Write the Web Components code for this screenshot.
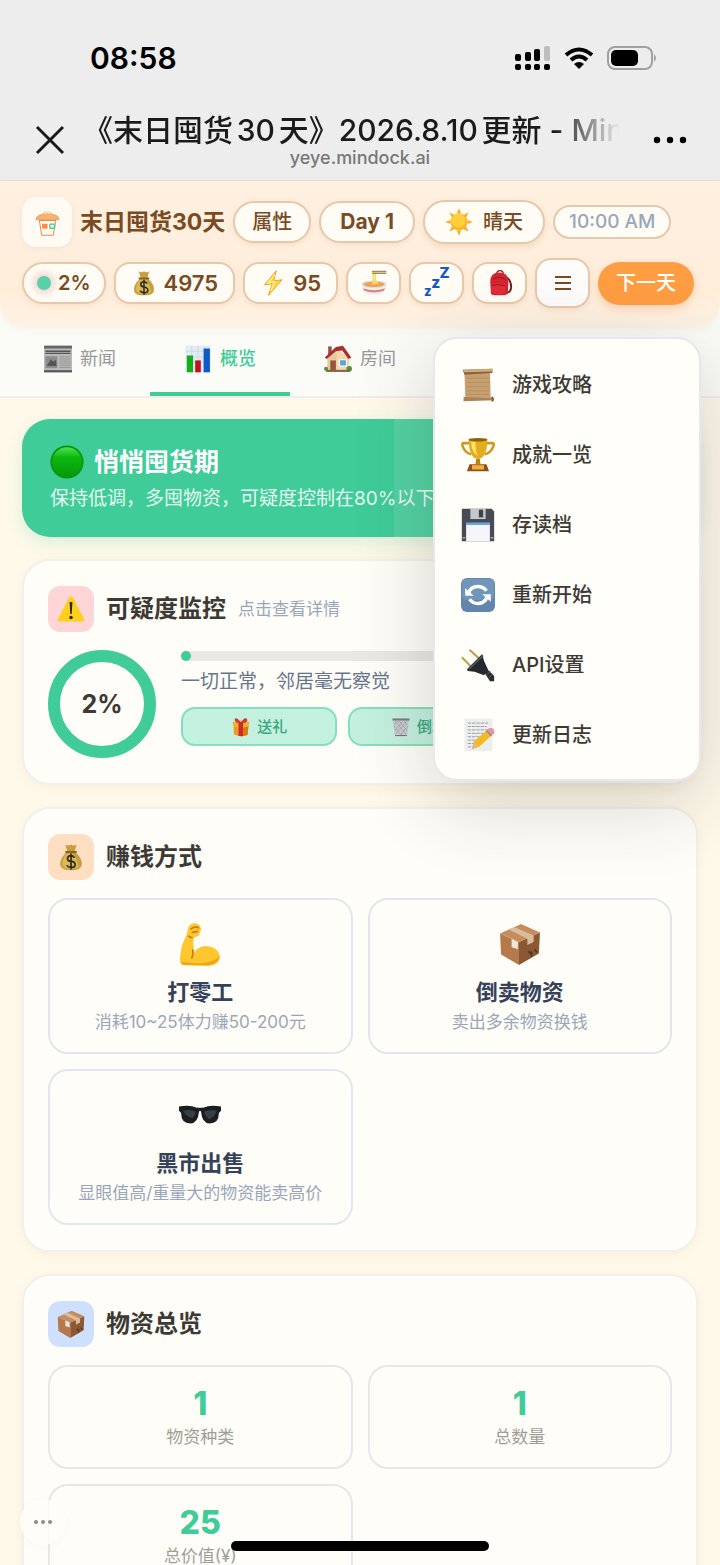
<!DOCTYPE html>
<html lang="zh-CN">
<head>
<meta charset="UTF-8">
<meta name="viewport" content="width=device-width, initial-scale=1">
<title>末日囤货30天</title>
<style>
  :root {
    --green: #3fcc99;
    --brown: #7a4a22;
    --ink: #3d3a35;
    --cream: #fffdf7;
    --muted: #9aa6ba;
    --tan: #e6c8ab;
  }
  body {
    margin: 0;
    font-family: Inter, "Noto Sans CJK SC", sans-serif;
    color: var(--ink);
    background: #fff9ea;
  }
</style>
</head>
<body>
<game-app></game-app>

<script>
// Every icon is drawn on a 40x40 grid
const ICONS = {
  logo: `<path d="M8 17l3 20q0 2 2 2h14q2 0 2-2l3-20z" fill="#fffaf0" stroke="#e98a52" stroke-width="1.5"/>
    <path d="M3 16q0-7 10-8 2-4 7-4t7 4q10 1 10 8z" fill="#f6b26e" stroke="#d98c4d" stroke-width="1"/><path d="M16 7q4-5 8 0" fill="none" stroke="#fff3dc" stroke-width="2"/>
    <rect x="12" y="22" width="8" height="7" fill="#ff8a3c"/><rect x="23.500" y="22.500" width="7" height="6" rx="1" fill="#fff" stroke="#3fcc99" stroke-width="2"/>`,
  money: `<path d="M14 13Q2 24 5 33q2 6 15 6t15-6q3-9-9-20z" fill="#c89f3f"/><path d="M15 14Q6 24 8 32q3 5 12 5 7 0 11-3-4-15-9-20z" fill="#dcb858"/>
    <path d="M12 2q4 3 8 0 4 3 8 0l-3 11H15z" fill="#c89f3f"/><path d="M13 13h14" stroke="#8a6420" stroke-width="3" stroke-linecap="round"/>
    <path d="M25 21q-2-3-5-3-5 0-5 4t5 4q6 1 6 5t-6 4q-4 0-6-3M20 15v23" fill="none" stroke="#2d2a20" stroke-width="2.400"/>`,
  bolt: `<path d="M25 1L7 23l12-2-6 18 21-24-13 2z" fill="#ffd83d" stroke="#f0a020" stroke-width="1.500" stroke-linejoin="round"/><path d="M23 7L12 20l10-2-5 14" fill="none" stroke="#fff3a0" stroke-width="2"/>`,
  noodle: `<path d="M1 22h38q0 11-10 16H11Q1 33 1 22z" fill="#eceef0"/><path d="M3 28q17 6 34 0l-2 4q-15 5-30 0z" fill="#d9877c"/><ellipse cx="20" cy="22" rx="19" ry="6" fill="#d9dde0"/><ellipse cx="20" cy="22" rx="16" ry="4" fill="#eea050"/>
    <path d="M19 22V4M22 22V4M17 22q7-5 9 0" fill="none" stroke="#f8dc62" stroke-width="2.500"/><path d="M17 2h22M17 5h22" stroke="#a88a54" stroke-width="2"/>`,
  zzz: `<g fill="#1556c8" font-family="Inter, sans-serif" font-weight="800"><text x="0" y="40" font-size="20">z</text><text x="11" y="27" font-size="24">z</text><text x="24" y="13" font-size="23">Z</text></g>`,
  backpack: `<path d="M28 10q10 5 9 18-1 7-7 7" fill="none" stroke="#6d2023" stroke-width="3"/><path d="M15 6q0-5 5-5t5 5" fill="none" stroke="#991c22" stroke-width="2"/><path d="M5 18Q5 4 19 4t14 14l-1 18q-1 3-13 3-13 0-13-3z" fill="#d22530"/>
    <path d="M6 22q12-4 23 0l-1 13q-11 4-21 0z" fill="#e02d39"/><path d="M7 24q11-3 21 0M9 14q9-5 19 0" fill="none" stroke="#961821" stroke-width="1.500"/>`,
  sun: `<path d="M20 0l3 8h-6zM20 40l3-8h-6zM0 20l8-3v6zM40 20l-8-3v6zM6 6l8 4-4 4zM34 6l-8 4 4 4zM6 34l8-4-4-4zM34 34l-8-4 4-4z" fill="#f9ad28"/><circle cx="20" cy="20" r="12" fill="#fbb42a"/><circle cx="19" cy="18" r="10" fill="#ffd03c"/>`,
  news: `<path d="M0 1h40v38H0z" fill="#b9b9b9"/><path d="M0 1h40v4H0z" fill="#666"/><path d="M2 9h36M2 12h36" stroke="#555" stroke-width="2"/><path d="M2 16h17v17H2z" fill="#8c8c8c"/><path d="M4 30l6-10 3 4 4-3 1 9z" fill="#555"/><path d="M22 17h16M22 20h16M22 23h16M22 26h16M22 29h16M22 32h16" stroke="#888"/><path d="M0 36h40v3H0z" fill="#555"/>`,
  chart: `<path d="M2 1h36v38H2z" fill="#e2ebf4"/><path d="M2 9h36M2 17h36M2 25h36M11 1v38M20 1v38M29 1v38" stroke="#c7d4e2"/><path d="M4 15h9v24H4z" fill="#14b01c"/><path d="M16 22h8v17h-8z" fill="#c2101e"/><path d="M28 5h9v34h-9z" fill="#0c5bc4"/>`,
  house: `<path d="M5 18L18 5l18 13v18H5z" fill="#f0d8ae"/><path d="M6 2h5v12H6z" fill="#9c4d3b"/><path d="M1 18L17 3l10-2 12 17-4 2-9-12-9 1L4 20z" fill="#a92d31"/><path d="M5 20L18 9v27H5z" fill="#e8cb9b"/>
    <path d="M9 22h8v15H9z" fill="#96563a"/><path d="M22 21h10v9H22z" fill="#59a5d8" stroke="#fff" stroke-width="1.500"/><circle cx="3" cy="34" r="3" fill="#4c9638"/><circle cx="36" cy="34" r="4" fill="#4c9638"/><path d="M3 37h34" stroke="#896347" stroke-width="3"/>`,
  scroll: `<path d="M4 4h30l1 31H5z" fill="#c7a071"/><path d="M2 2l35-1v5L4 8z" fill="#8a6540"/><path d="M3 2l34-1v3L3 5z" fill="#d0aa79"/><path d="M3 34l34 1 1 3-35 1z" fill="#aa8255"/><path d="M7 12h26M7 17h26M7 22h26M7 27h26M7 31h26" stroke="#b48d60"/><path d="M36 34q4 3 0 5" fill="none" stroke="#80593a" stroke-width="2"/>`,
  trophy: `<path d="M10 6H3q-3 0 0 6t9 7M30 6h7q3 0 0 6t-9 7" fill="none" stroke="#cf9818" stroke-width="3"/><path d="M9 1h22q0 20-8 23h-6Q9 21 9 1z" fill="#e6ac20"/><path d="M12 4h5q0 12 3 17-8-4-8-17z" fill="#ffe268"/><ellipse cx="20" cy="2" rx="11" ry="2" fill="#8a620c"/><path d="M18 24h4l1 7h-6z" fill="#bc8210"/><path d="M10 31h20l3 8H7z" fill="#974d1a"/><path d="M13 32h14v5H13z" fill="#efb33a"/>`,
  floppy: `<path d="M1 1h35l3 3v35H1z" fill="#484b51"/><path d="M11 1h18v12H11z" fill="#c4c8cc"/><path d="M21 2h5v9h-5z" fill="#3d4248"/><path d="M6 18h28v21H6z" fill="#f4f6fc"/><path d="M6 17h28v3H6z" fill="#6aa4e2"/><path d="M2 35h3M35 35h3" stroke="#aaa" stroke-width="2"/>`,
  refresh: `<rect width="40" height="40" rx="7" fill="#6086ad"/><rect x="1" y="1" width="38" height="25" rx="6" fill="#7196bb"/><path d="M9 18q2-8 11-8 6 0 10 5M31 22q-3 8-11 8-6 0-10-5" fill="none" stroke="#fff" stroke-width="4"/><path d="M5 12v9h10zM35 28v-9H25z" fill="#fff"/>`,
  plug: `<path d="M1 11l13 13M10 2l13 12" stroke="#c2a04e" stroke-width="2.500"/><path d="M7 25L25 7l2 8 5 11-5 6-11-4-8-1z" fill="#25282d"/><path d="M9 25L26 9" stroke="#52565c" stroke-width="2"/><path d="M27 28l4-3 8 8v6h-5z" fill="#292b30"/><path d="M29 33l6-6M32 36l6-6" stroke="#666"/>`,
  memo: `<path d="M4 1h33v38H4z" fill="#eceeed"/><path d="M8 6h25M8 10h22M8 14h25M8 18h19M8 22h15M8 26h12M8 30h10M8 34h8" stroke="#8d9297" stroke-dasharray="4 1"/><path d="M13 36l2-8 18-16 6 6-18 16z" fill="#f4b922"/><path d="M15 28l5 6-7 3z" fill="#e1b88d"/><path d="M30 15l6 6 3-3q1-4-2-6-3-1-5 1z" fill="#e996a4"/><path d="M30 15l6 6" stroke="#85949b" stroke-width="2"/>`,
  dot: `<defs><linearGradient id="g" x2="0" y2="1"><stop offset="0" stop-color="#4be04e"/><stop offset=".35" stop-color="#0cb80f"/><stop offset="1" stop-color="#07980a"/></linearGradient></defs><circle cx="20" cy="20" r="19.500" fill="#07930a"/><circle cx="20" cy="20" r="17.500" fill="url(#g)"/>`,
  warning: `<path d="M20 2q2 0 3 2l16 31q1 3-2 3H3q-3 0-2-3L17 4q1-2 3-2z" fill="#ffcf1a"/><path d="M18 10h4l-1 17h-2z" fill="#2b2515"/><circle cx="20" cy="32" r="2.500" fill="#2b2515"/>`,
  gift: `<path d="M5 16h30l-2 20-13 3-14-4z" fill="#f09a26"/><path d="M20 18h15l-2 18-13 3z" fill="#d97a18"/><path d="M3 10l17-3 17 3-2 9-15 3-15-3z" fill="#f6ad36"/><path d="M15 12h9v26h-9z" fill="#cc2c27"/><path d="M20 12Q8 12 8 5q2-6 12 7 8-13 12-7 1 7-12 7z" fill="#e3352e" stroke="#af2021"/>`,
  trash: `<path d="M3 3h34l-5 36H8z" fill="#c9cdd0"/><path d="M3 3h34v4H3z" fill="#777c80"/><path d="M8 8l22 26M16 8l16 19M26 8l7 8M6 18l16 20M32 8L9 34M24 8L7 27M14 8l-8 8M34 18L18 38" stroke="#8d9295"/><path d="M8 37h24" stroke="#74797d" stroke-width="2"/>`,
  arm: `<path d="M3 40Q1 39 1 35q0-10 4-19 2-3 3-8Q9 1 14 0q7 1 7 6l-2 6-5 2q-1 5 0 10 0 3-1 6 3-7 12-8 12 0 14 10 0 8-11 9-12 0-25-1z" fill="#ffc62e"/><path d="M2 37q12 2 21 1 12-1 16-7-1 8-11 9H4z" fill="#eda51b"/><path d="M13 25q1 5-1 9M11 6q5-4 8-1M12 9l6-1M13 14q-3 0-4-2" fill="none" stroke="#c17c16" stroke-width="1.500"/>`,
  box: `<path d="M1 10l18 8v22L2 30z" fill="#b5794b"/><path d="M39 9L19 18v22l19-11z" fill="#8c5733"/><path d="M1 10L21 1l18 8-20 9z" fill="#c68c5b"/><path d="M9 6l18 9v6l6-3v-6L15 4z" fill="#d9bc9c"/><path d="M12 15l6 3v7l-6-2z" fill="#eee6dc"/><path d="M28 27l3 3M31 27v5M34 25l2 3" stroke="#503322" stroke-width="1.500"/>`,
  glasses: `<path d="M0 12q10-2 17 1h6q7-3 17-1v4l-2 2q0 10-9 10-7 0-8-11-1-2-2 0-1 11-8 11-9 0-9-10l-2-2z" fill="#1b1e20"/><path d="M4 16q6-2 12 1-1 4-3 6-6-1-9-7zM24 17q6-3 12-1-2 6-7 8-4-2-5-7z" fill="#383e42"/>`
};

class GameIcon extends HTMLElement {
  constructor() {
    super();
    this.attachShadow({ mode: "open" });
  }

  connectedCallback() {
    this.shadowRoot.innerHTML = `
      <style>
        :host { display: inline-block; width: var(--icon-size, 28px); height: var(--icon-size, 28px); flex: none; }
        svg { display: block; width: 100%; height: 100%; overflow: visible; }
      </style>
      <svg viewBox="0 0 40 40" aria-hidden="true">${ICONS[this.getAttribute("name")]}</svg>
    `;
  }
}
customElements.define("game-icon", GameIcon);

// Phone status line plus the in-app browser title
class BrowserChrome extends HTMLElement {
  constructor() {
    super();
    this.attachShadow({ mode: "open" });
  }

  connectedCallback() {
    this.shadowRoot.innerHTML = `
      <style>
        :host { display: block; background: #ededed; border-bottom: 1px solid #e2e2e2; color: #1b1b1b; }
        .status { display: flex; justify-content: space-between; align-items: center; height: 36px; padding: 40px 63px 0 90px; }
        .time { font-size: 30px; line-height: 36px; font-weight: 600; color: #000; }
        .signals { display: flex; align-items: center; gap: 13px; }
        .signals svg { display: block; }
        .bar { display: flex; align-items: center; padding: 32px 32px 8px; height: 64px; }
        button { border: 0; padding: 0; background: none; width: 36px; height: 36px; flex: none; }
        .center { flex: 1; min-width: 0; text-align: center; }
        .title {
          margin: 0 32px 0 15px; font-size: 30px; line-height: 35px; font-weight: 500; text-align: left; text-autospace: normal;
          white-space: nowrap; overflow: hidden;
          -webkit-mask-image: linear-gradient(90deg, #000 88%, transparent 100%);
          mask-image: linear-gradient(90deg, #000 88%, transparent 100%);
        }
        .url { font-size: 18px; line-height: 20px; font-weight: 500; color: #777; }
      </style>
      <div class="status">
        <span class="time">08:58</span>
        <span class="signals">
          <svg width="36" height="25" viewBox="0 0 36 25"><rect x="0" y="8" width="6" height="7" rx="2"/><rect x="10" y="6" width="6" height="9" rx="2"/><rect x="19" y="3" width="6" height="12" rx="2"/><rect x="29" y="0" width="6" height="15" rx="2" fill="#bdbdbd"/><rect x="0" y="18" width="6" height="6" rx="2"/><rect x="10" y="18" width="6" height="6" rx="2"/><rect x="19" y="18" width="6" height="6" rx="2"/><rect x="29" y="18" width="6" height="6" rx="2"/></svg>
          <svg width="30" height="22" viewBox="0 0 30 22"><g fill="none" stroke="#000" stroke-width="4"><path d="M2 8q13-11 26 0"/><path d="M7 13q8-7 16 0"/></g><path d="M10 17q5-4 10 0l-5 5z"/></svg>
          <svg width="50" height="24" viewBox="0 0 50 24"><rect x="1" y="1" width="44" height="22" rx="7" fill="none" stroke="#a0a0a0" stroke-width="2"/><rect x="4" y="4" width="27" height="16" rx="5"/><path d="M47 8q4 4 0 8z" fill="#a0a0a0"/></svg>
        </span>
      </div>
      <div class="bar">
        <button aria-label="关闭"><svg width="36" height="36" viewBox="0 0 36 36"><path d="M5 5l26 26M31 5L5 31" stroke="#1b1b1b" stroke-width="3"/></svg></button>
        <div class="center">
          <div class="title">《末日囤货30天》2026.8.10更新 - Mindock</div>
          <div class="url">yeye.mindock.ai</div>
        </div>
        <button aria-label="更多"><svg width="36" height="36" viewBox="0 0 36 36"><circle cx="5" cy="18" r="3.200"/><circle cx="18" cy="18" r="3.200"/><circle cx="31" cy="18" r="3.200"/></svg></button>
      </div>
    `;
  }
}
customElements.define("browser-chrome", BrowserChrome);

// kind: attr, day, weather, clock, risk, stat, icon, menu, next
class StatPill extends HTMLElement {
  constructor() {
    super();
    this.attachShadow({ mode: "open" });
  }

  connectedCallback() {
    this.shadowRoot.innerHTML = `
      <style>
        :host { display: block; flex: none; }
        button {
          box-sizing: border-box; display: flex; align-items: center; justify-content: center; gap: 7px;
          height: 42px; padding: 0 17px; border: 2px solid var(--tan); border-radius: 22px;
          background: #fffcf6; color: var(--brown); white-space: nowrap;
          font: 500 20px/24px Inter, "Noto Sans CJK SC", sans-serif;
          box-shadow: 0 2px 5px rgba(190, 120, 60, 0.12);
        }
        :host([kind="day"]) button { padding: 0 19px; font-size: 21px; font-weight: 700; }
        :host([kind="weather"]) button { height: 44px; gap: 10px; padding: 0 20px; box-shadow: 0 3px 6px rgba(190, 120, 60, 0.18); }
        :host([kind="clock"]) button { height: 34px; padding: 0 14px; font-size: 19px; color: var(--muted); box-shadow: none; }
        :host([kind="risk"]) button { padding: 0 13px; font-weight: 600; }
        :host([kind="stat"]) button { padding: 0 15px; border-radius: 16px; font-size: 22px; font-weight: 600; --icon-size: 26px; }
        :host([kind="icon"]) button { width: 55px; padding: 0; border-radius: 16px; --icon-size: 26px; }
        :host([kind="menu"]) button { width: 55px; height: 50px; padding: 0; border-radius: 16px; background: #fdfcfa; }
        :host([kind="next"]) button { height: 43px; padding: 0 18px; border: 0; background: #ff9d42; color: #fff; box-shadow: 0 4px 8px rgba(255, 140, 50, 0.25); }
      </style>
      <button aria-label="${this.getAttribute("label") || ""}"><slot></slot></button>
    `;
    if (!this.hasAttribute("label")) this.shadowRoot.querySelector("button").removeAttribute("aria-label");
  }
}
customElements.define("stat-pill", StatPill);

class DropMenu extends HTMLElement {
  constructor() {
    super();
    this.attachShadow({ mode: "open" });
  }

  connectedCallback() {
    const items = [
      ["scroll", "游戏攻略"],
      ["trophy", "成就一览"],
      ["floppy", "存读档"],
      ["refresh", "重新开始"],
      ["plug", "API设置"],
      ["memo", "更新日志"]
    ];
    this.shadowRoot.innerHTML = `
      <style>
        :host {
          display: block; box-sizing: border-box; width: 268px; padding: 11px 0 9px;
          border: 2px solid #e8e8ec; border-radius: 24px; background: #fffef8;
          box-shadow: 0 20px 80px rgba(40, 40, 40, 0.2);
          --icon-size: 34px;
        }
        button {
          display: flex; align-items: center; gap: 17px; width: 100%; height: 70px; padding: 0 26px;
          border: 0; background: none; color: var(--ink); font: 500 20px/28px Inter, "Noto Sans CJK SC", sans-serif;
        }
      </style>
      ${items.map(([icon, text]) => `<button><game-icon name="${icon}"></game-icon>${text}</button>`).join("")}
    `;
  }
}
customElements.define("drop-menu", DropMenu);

class GameHeader extends HTMLElement {
  constructor() {
    super();
    this.attachShadow({ mode: "open" });
  }

  connectedCallback() {
    this.shadowRoot.innerHTML = `
      <style>
        :host {
          display: block; position: relative; z-index: 5; padding: 16px 22px 18px;
          background: linear-gradient(#fff0e0, #ffeddb 75%, #fff2e2);
          border-radius: 0 0 24px 24px; box-shadow: 0 2px 10px rgba(200, 140, 80, 0.1);
        }
        .row { display: flex; align-items: center; gap: 8px; height: 50px; }
        .row + .row { margin-top: 11px; }
        .logo { width: 50px; height: 50px; display: grid; place-items: center; flex: none; border-radius: 14px; background: #fffaf3; box-shadow: 0 1px 4px rgba(190, 120, 60, 0.12); --icon-size: 27px; }
        h1 { margin: 0; font-size: 23px; line-height: 30px; font-weight: 700; color: var(--brown); white-space: nowrap; }
        .pulse { width: 14px; height: 14px; border-radius: 50%; background: #58d0a8; box-shadow: 0 0 8px 3px rgba(200, 120, 110, 0.35); }
        drop-menu { position: absolute; top: calc(100% + 11px); right: 19px; }
      </style>
      <div class="row">
        <span class="logo"><game-icon name="logo"></game-icon></span>
        <h1>末日囤货30天</h1>
        <stat-pill kind="attr">属性</stat-pill>
        <stat-pill kind="day">Day 1</stat-pill>
        <stat-pill kind="weather"><game-icon name="sun"></game-icon>晴天</stat-pill>
        <stat-pill kind="clock">10:00 AM</stat-pill>
      </div>
      <div class="row">
        <stat-pill kind="risk"><span class="pulse"></span>2%</stat-pill>
        <stat-pill kind="stat"><game-icon name="money"></game-icon>4975</stat-pill>
        <stat-pill kind="stat"><game-icon name="bolt"></game-icon>95</stat-pill>
        <stat-pill kind="icon" label="吃饭"><game-icon name="noodle"></game-icon></stat-pill>
        <stat-pill kind="icon" label="睡觉"><game-icon name="zzz"></game-icon></stat-pill>
        <stat-pill kind="icon" label="背包"><game-icon name="backpack"></game-icon></stat-pill>
        <stat-pill kind="menu" label="菜单"><svg width="16" height="16" viewBox="0 0 16 16"><path d="M0 2h16M0 8h16M0 14h16" stroke="#7a4a22" stroke-width="2"/></svg></stat-pill>
        <stat-pill kind="next">下一天</stat-pill>
      </div>
      <drop-menu></drop-menu>
    `;
  }
}
customElements.define("game-header", GameHeader);

class TabNav extends HTMLElement {
  constructor() {
    super();
    this.attachShadow({ mode: "open" });
  }

  connectedCallback() {
    this.shadowRoot.innerHTML = `
      <style>
        :host { display: block; margin-top: -24px; padding: 24px 10px 0; background: #fbfbf8; border-bottom: 2px solid #eeeeec; }
        nav { display: grid; grid-template-columns: repeat(5, 1fr); }
        button {
          display: flex; align-items: center; justify-content: center; gap: 8px; height: 70px; padding: 0;
          border: 0; border-bottom: 4px solid transparent; background: none; color: #989898;
          font: 400 18px/24px Inter, "Noto Sans CJK SC", sans-serif;
        }
        button.active { color: var(--green); border-color: var(--green); font-weight: 500; }
      </style>
      <nav>
        <button><game-icon name="news"></game-icon>新闻</button>
        <button class="active" aria-current="page"><game-icon name="chart"></game-icon>概览</button>
        <button><game-icon name="house"></game-icon>房间</button>
      </nav>
    `;
  }
}
customElements.define("tab-nav", TabNav);

class PhaseBanner extends HTMLElement {
  constructor() {
    super();
    this.attachShadow({ mode: "open" });
  }

  connectedCallback() {
    this.shadowRoot.innerHTML = `
      <style>
        :host {
          display: block; box-sizing: border-box; padding: 25px 28px; border-radius: 28px; color: #fff;
          background: linear-gradient(90deg, transparent 55%, rgba(255, 255, 255, 0.1) 55%), var(--green);
          box-shadow: 0 6px 18px rgba(63, 204, 153, 0.2); --icon-size: 34px;
        }
        h2 { display: flex; align-items: center; gap: 10px; margin: 0; font-size: 25px; line-height: 36px; font-weight: 700; }
        p { margin: 7px 0 1px; font-size: 19px; line-height: 24px; color: #e6faf2; white-space: nowrap; }
      </style>
      <h2><game-icon name="dot"></game-icon><slot name="title"></slot></h2>
      <p><slot></slot></p>
    `;
  }
}
customElements.define("phase-banner", PhaseBanner);

class GameCard extends HTMLElement {
  constructor() {
    super();
    this.attachShadow({ mode: "open" });
  }

  connectedCallback() {
    const { icon, tint, heading, hint } = this.dataset;

    this.shadowRoot.innerHTML = `
      <style>
        :host { display: block; padding: 25px 24px; border: 2px solid #f1f0ec; border-radius: 28px; background: var(--cream); box-shadow: 0 3px 12px rgba(160, 130, 70, 0.08); }
        header { display: flex; align-items: center; gap: 12px; margin-bottom: 18px; }
        .chip { display: grid; place-items: center; width: 46px; height: 46px; border-radius: 12px; background: ${tint}; }
        h2 { margin: 0; font-size: 24px; line-height: 32px; font-weight: 700; }
        small { font-size: 17px; line-height: 24px; color: var(--muted); }
      </style>
      <header>
        <span class="chip"><game-icon name="${icon}"></game-icon></span>
        <h2>${heading}</h2>
        ${hint ? `<small>${hint}</small>` : ""}
      </header>
      <slot></slot>
    `;
  }
}
customElements.define("game-card", GameCard);

class RiskMonitor extends HTMLElement {
  constructor() {
    super();
    this.attachShadow({ mode: "open" });
  }

  connectedCallback() {
    this.shadowRoot.innerHTML = `
      <style>
        :host { display: flex; gap: 25px; }
        .ring { box-sizing: border-box; width: 108px; height: 108px; flex: none; display: grid; place-items: center; border: 12px solid var(--green); border-radius: 50%; font-size: 25px; line-height: 28px; font-weight: 700; }
        .side { flex: 1; min-width: 0; }
        .track { height: 10px; border-radius: 5px; background: #e9e8e4; margin-top: 1px; }
        .fill { width: 2%; height: 10px; border-radius: 5px; background: var(--green); }
        p { margin: 8px 0 13px; font-size: 19px; line-height: 25px; color: #66758f; }
        .actions { display: grid; grid-template-columns: repeat(3, 1fr); gap: 11px; }
        button {
          box-sizing: border-box; display: flex; align-items: center; justify-content: center; gap: 6px; height: 39px; padding: 0;
          border: 2px solid #83dfbf; border-radius: 14px; background: #c3f0df; color: #35a67c;
          font: 500 15px/20px Inter, "Noto Sans CJK SC", sans-serif; --icon-size: 20px;
        }
      </style>
      <div class="ring">2%</div>
      <div class="side">
        <div class="track"><div class="fill"></div></div>
        <p>一切正常，邻居毫无察觉</p>
        <div class="actions">
          <button><game-icon name="gift"></game-icon>送礼</button>
          <button><game-icon name="trash"></game-icon>倒垃圾</button>
        </div>
      </div>
    `;
  }
}
customElements.define("risk-monitor", RiskMonitor);

class TileGrid extends HTMLElement {
  constructor() {
    super();
    this.attachShadow({ mode: "open" });
  }

  connectedCallback() {
    this.shadowRoot.innerHTML = `
      <style>
        :host { display: grid; grid-template-columns: 1fr 1fr; gap: 15px; }
      </style>
      <slot></slot>
    `;
  }
}
customElements.define("tile-grid", TileGrid);

class ActionTile extends HTMLElement {
  constructor() {
    super();
    this.attachShadow({ mode: "open" });
  }

  connectedCallback() {
    const { icon, heading } = this.dataset;

    this.shadowRoot.innerHTML = `
      <style>
        :host { display: block; --icon-size: 42px; }
        button {
          display: flex; flex-direction: column; align-items: center; width: 100%; padding: 23px 4px 16px;
          border: 2px solid #e2e7ed; border-radius: 20px; background: transparent;
          font-family: Inter, "Noto Sans CJK SC", sans-serif;
        }
        strong { margin-top: 11px; font-size: 22px; line-height: 32px; font-weight: 700; color: #35425a; }
        span { font-size: 17px; line-height: 28px; color: var(--muted); white-space: nowrap; }
      </style>
      <button><game-icon name="${icon}"></game-icon><strong>${heading}</strong><span><slot></slot></span></button>
    `;
  }
}
customElements.define("action-tile", ActionTile);

class StatTile extends HTMLElement {
  constructor() {
    super();
    this.attachShadow({ mode: "open" });
  }

  connectedCallback() {
    this.shadowRoot.innerHTML = `
      <style>
        :host { display: block; padding: 18px 4px 16px; border: 2px solid #e7e6ea; border-radius: 20px; text-align: center; }
        b { display: block; font-size: 32px; line-height: 38px; font-weight: 800; color: var(--green); }
        span { display: block; font-size: 17px; line-height: 28px; color: #9f9d98; }
      </style>
      <b>${this.dataset.value}</b>
      <span><slot></slot></span>
    `;
  }
}
customElements.define("stat-tile", StatTile);

class GameApp extends HTMLElement {
  constructor() {
    super();
    this.attachShadow({ mode: "open" });
  }

  connectedCallback() {
    this.shadowRoot.innerHTML = `
      <style>
        :host { display: flex; flex-direction: column; position: relative; height: 100vh; overflow: hidden; }
        browser-chrome, game-header, tab-nav { flex: none; }
        main { flex: 1; min-height: 0; overflow: hidden; display: flex; flex-direction: column; gap: 22px; padding: 21px 22px 0; }
        main > * { flex: none; }
        .more {
          position: absolute; left: 20px; bottom: 20px; width: 46px; height: 46px; padding: 0; border: 0; border-radius: 50%;
          display: grid; place-items: center; background: rgba(255, 253, 248, 0.85); box-shadow: 0 2px 8px rgba(120, 100, 60, 0.03);
        }
        .home { position: absolute; left: 50%; bottom: 14px; width: 258px; height: 10px; margin-left: -129px; border-radius: 5px; background: #000; }
      </style>
      <browser-chrome></browser-chrome>
      <game-header></game-header>
      <tab-nav></tab-nav>
      <main>
        <phase-banner><span slot="title">悄悄囤货期</span>保持低调，多囤物资，可疑度控制在80%以下</phase-banner>
        <game-card data-icon="warning" data-tint="#ffd6d8" data-heading="可疑度监控" data-hint="点击查看详情">
          <risk-monitor></risk-monitor>
        </game-card>
        <game-card data-icon="money" data-tint="#ffdfc2" data-heading="赚钱方式">
          <tile-grid>
            <action-tile data-icon="arm" data-heading="打零工">消耗10~25体力赚50-200元</action-tile>
            <action-tile data-icon="box" data-heading="倒卖物资">卖出多余物资换钱</action-tile>
            <action-tile data-icon="glasses" data-heading="黑市出售">显眼值高/重量大的物资能卖高价</action-tile>
          </tile-grid>
        </game-card>
        <game-card data-icon="box" data-tint="#cfe0ff" data-heading="物资总览">
          <tile-grid>
            <stat-tile data-value="1">物资种类</stat-tile>
            <stat-tile data-value="1">总数量</stat-tile>
            <stat-tile data-value="25">总价值(¥)</stat-tile>
          </tile-grid>
        </game-card>
      </main>
      <button class="more" aria-label="更多操作"><svg width="20" height="6" viewBox="0 0 20 6" fill="#8d8b88"><circle cx="3" cy="3" r="2"/><circle cx="10" cy="3" r="2"/><circle cx="17" cy="3" r="2"/></svg></button>
      <div class="home"></div>
    `;
  }
}
customElements.define("game-app", GameApp);
</script>
</body>
</html>
